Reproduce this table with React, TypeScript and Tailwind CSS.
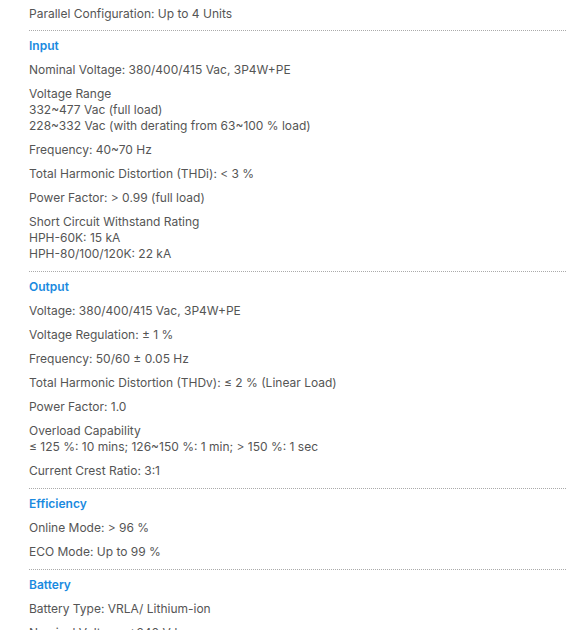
import React from "react";

type Section = { title: string; items: string[][] };

const sections: Section[] = [
  {
    title: "Input",
    items: [
      ["Nominal Voltage: 380/400/415 Vac, 3P4W+PE"],
      ["Voltage Range", "332~477 Vac (full load)", "228~332 Vac (with derating from 63~100 % load)"],
      ["Frequency: 40~70 Hz"],
      ["Total Harmonic Distortion (THDi): < 3 %"],
      ["Power Factor: > 0.99 (full load)"],
      ["Short Circuit Withstand Rating", "HPH-60K: 15 kA", "HPH-80/100/120K: 22 kA"],
    ],
  },
  {
    title: "Output",
    items: [
      ["Voltage: 380/400/415 Vac, 3P4W+PE"],
      ["Voltage Regulation: ± 1 %"],
      ["Frequency: 50/60 ± 0.05 Hz"],
      ["Total Harmonic Distortion (THDv): ≤ 2 % (Linear Load)"],
      ["Power Factor: 1.0"],
      ["Overload Capability", "≤ 125 %: 10 mins; 126~150 %: 1 min; > 150 %: 1 sec"],
      ["Current Crest Ratio: 3:1"],
    ],
  },
  {
    title: "Efficiency",
    items: [["Online Mode: > 96 %"], ["ECO Mode: Up to 99 %"]],
  },
  {
    title: "Battery",
    items: [["Battery Type: VRLA/ Lithium-ion"], ["Nominal Voltage: ±240 Vdc"]],
  },
];

export default function App() {
  return (
    <div className="h-[630px] overflow-hidden bg-white pl-[29px] pr-px font-['Inter',sans-serif] text-[12px] leading-4 text-[#555]">
      <div className="border-b border-dotted border-[#aaa] pt-[6px] pb-2">Parallel Configuration: Up to 4 Units</div>
      {sections.map((s) => (
        <div key={s.title} className="flex flex-col gap-2 border-b border-dotted border-[#aaa] pt-[7px] pb-[9px]">
          <div className="font-semibold text-[#1a8ae0]">{s.title}</div>
          {s.items.map((lines, i) => (
            <div key={i}>
              {lines.map((l, j) => (
                <div key={j}>{l}</div>
              ))}
            </div>
          ))}
        </div>
      ))}
    </div>
  );
}
